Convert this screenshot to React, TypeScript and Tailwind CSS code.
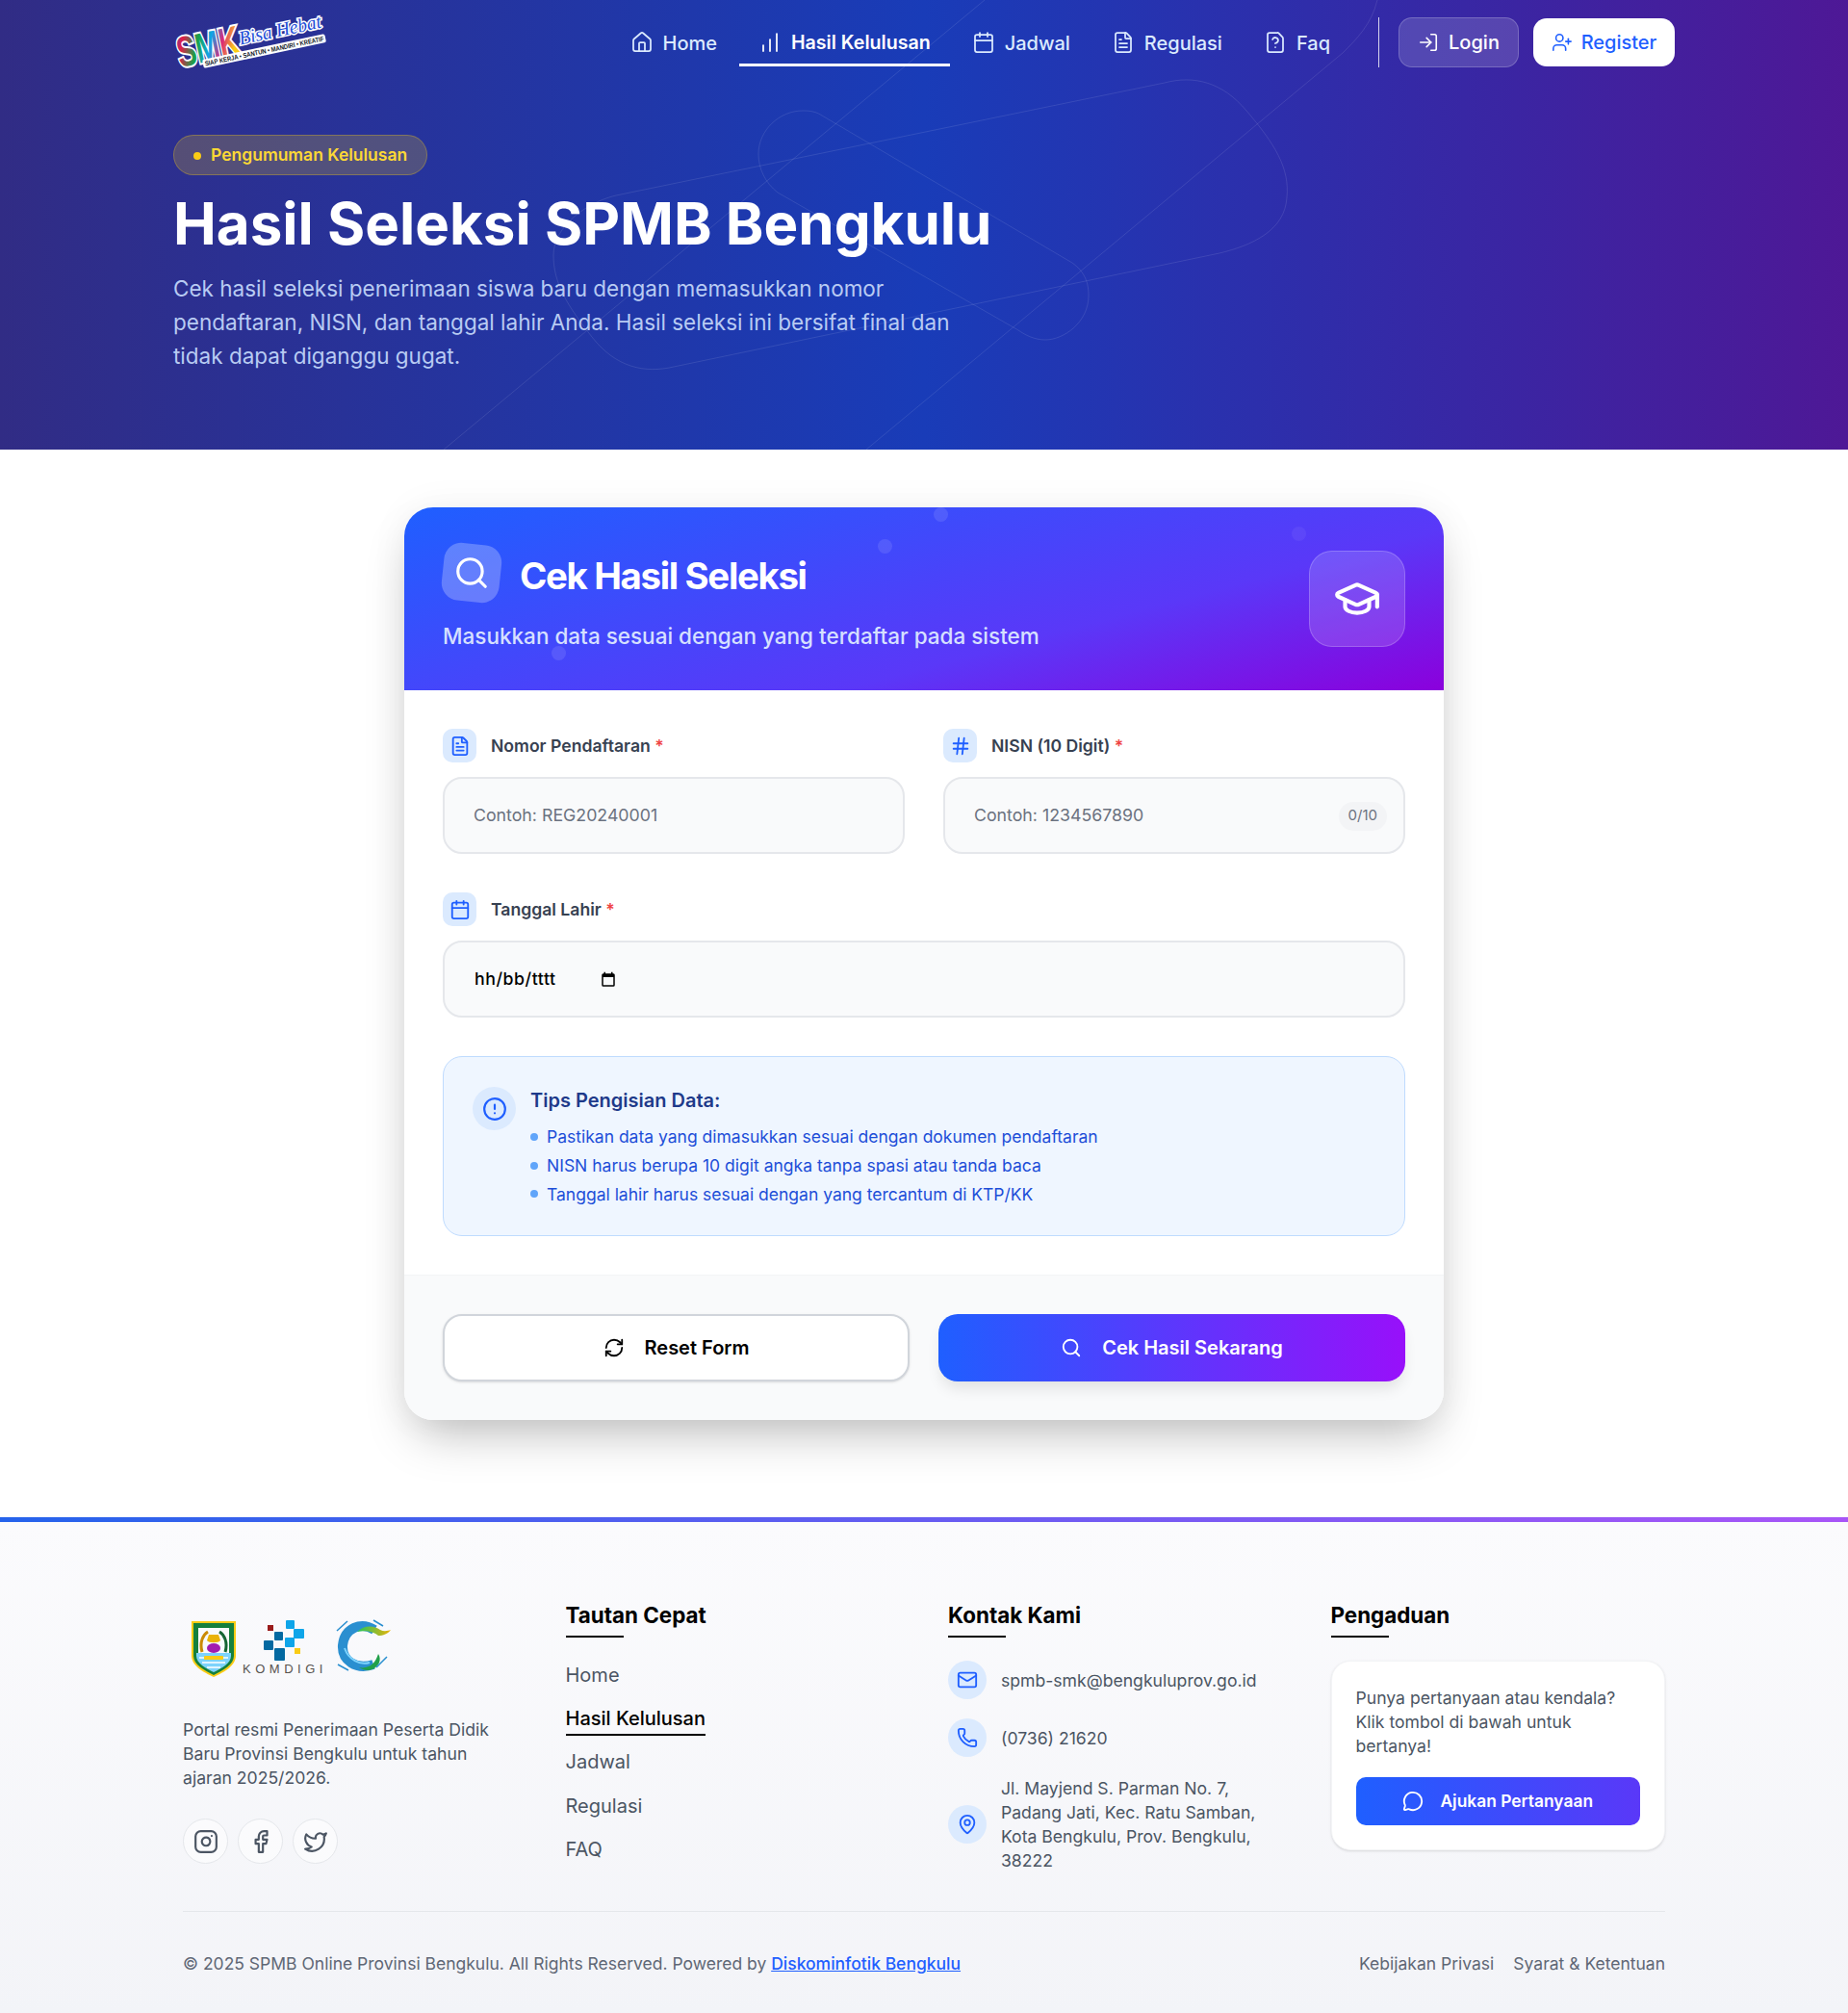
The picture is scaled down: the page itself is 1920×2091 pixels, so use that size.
import {
  Calendar,
  ChartNoAxesColumnIncreasing,
  CircleAlert,
  Facebook,
  FileQuestion,
  FileText,
  GraduationCap,
  Hash,
  House,
  Instagram,
  LogIn,
  Mail,
  MapPin,
  MessageCircle,
  Phone,
  RefreshCw,
  Search,
  Twitter,
  UserPlus,
} from "lucide-react";

const navItems = [
  { label: "Home", icon: House },
  { label: "Hasil Kelulusan", icon: ChartNoAxesColumnIncreasing, active: true },
  { label: "Jadwal", icon: Calendar },
  { label: "Regulasi", icon: FileText },
  { label: "Faq", icon: FileQuestion },
];

const tips = [
  "Pastikan data yang dimasukkan sesuai dengan dokumen pendaftaran",
  "NISN harus berupa 10 digit angka tanpa spasi atau tanda baca",
  "Tanggal lahir harus sesuai dengan yang tercantum di KTP/KK",
];

const quickLinks = ["Home", "Hasil Kelulusan", "Jadwal", "Regulasi", "FAQ"];

const SmkLogo = () => (
  <svg width="170" height="60" viewBox="0 0 170 60" className="ml-[2px] shrink-0 overflow-visible">
    <defs>
      <linearGradient id="smk" x1="0" y1="0" x2="1" y2="0.3">
        <stop offset="0" stopColor="#1d4ed8" />
        <stop offset="0.18" stopColor="#e11d48" />
        <stop offset="0.42" stopColor="#16a34a" />
        <stop offset="0.62" stopColor="#0ea5e9" />
        <stop offset="0.8" stopColor="#db2777" />
        <stop offset="1" stopColor="#facc15" />
      </linearGradient>
    </defs>
    <g transform="rotate(-12 80 30)" fontFamily="'Liberation Sans', sans-serif">
      <text x="2" y="37" fontSize="44" fontWeight="700" fill="url(#smk)" stroke="#fff" strokeWidth="4" paintOrder="stroke" textLength="66" lengthAdjust="spacingAndGlyphs">SMK</text>
      <text x="68" y="27" fontSize="20" fontStyle="italic" fill="#1d4ed8" stroke="#fff" strokeWidth="3" paintOrder="stroke" fontFamily="'Liberation Serif', serif" textLength="87" lengthAdjust="spacingAndGlyphs">Bisa Hebat</text>
      <rect x="26" y="34" width="130" height="9" rx="2" fill="#fff" />
      <text x="28" y="41" fontSize="7" fontWeight="700" fill="#111827" textLength="126" lengthAdjust="spacingAndGlyphs">SIAP KERJA • SANTUN • MANDIRI • KREATIF</text>
    </g>
  </svg>
);

const HeroLines = () => (
  <svg className="absolute inset-0 h-full w-full" viewBox="0 0 1920 467" fill="none" stroke="#ffffff" strokeOpacity="0.1" strokeWidth="1">
    <path d="M1023 0 L461 467" />
    <path d="M1431 0 C1425 25 1410 40 1395 55 L900 467" />
    <path d="M640 203 L1210 86 C1240 78 1270 85 1295 115 C1325 150 1340 175 1337 205 C1335 240 1300 255 1267 263 L700 381 C670 388 640 382 615 350 C590 318 575 295 575 265 C575 235 610 210 640 203Z" />
    <path d="M854 120 L1114 273 C1128 283 1131 295 1131 307 C1131 335 1105 353 1086 353 C1075 353 1065 348 1058 343 L808 200 C795 190 788 175 788 160 C788 135 810 115 834 115 C842 115 848 116 854 120Z" />
  </svg>
);

const FieldLabel = ({ icon: Icon, text }: { icon: any; text: string }) => (
  <div className="flex h-[35px] items-center gap-[15px]">
    <span className="flex h-[35px] w-[35px] items-center justify-center rounded-[10px] bg-[#dbeafe] text-[#1f5fff]">
      <Icon size={22} strokeWidth={2} />
    </span>
    <span className="pt-[1px] text-[17.6px] font-semibold text-[#374151]">
      {text} <span className="text-[#ef4444]">*</span>
    </span>
  </div>
);

const inputBox =
  "mt-[15px] flex h-[80px] items-center rounded-[20px] border-2 border-[#e5e7eb] bg-[#f9fafb] px-[30px] pt-[1px] text-[17.76px]";

const footerHeading = "text-[22.4px] font-bold leading-[36px] text-black";

const App = () => {
  return (
    <div className="w-full bg-white font-['Inter',sans-serif]">
      <header className="relative h-[467px] overflow-hidden bg-[linear-gradient(to_right,#312c85_0%,#193cb8_50%,#4e1896_100%)]">
        <HeroLines />
        <div className="relative mx-auto w-[1560px]">
          <nav className="flex h-[88px] items-start justify-between pt-[17px]">
            <SmkLogo />
            <div className="flex items-start">
              <ul className="mt-[10px] flex items-center gap-[3px] text-[20px] font-medium text-[#dbeafe]">
                {navItems.map((item) => (
                  <li
                    key={item.label}
                    className={
                      item.active
                        ? "flex h-[42px] items-start gap-[10px] border-b-[3px] border-white px-[20px] pt-[3px] text-[19.6px] font-semibold text-white"
                        : "flex h-[42px] items-start gap-[10px] border-b-[3px] border-transparent px-[20px] pt-[3px]"
                    }
                  >
                    <item.icon size={24} strokeWidth={1.75} className="mt-[2px]" />
                    {item.label}
                  </li>
                ))}
              </ul>
              <div className="ml-[30px] mr-[20px] mt-[1px] h-[52px] w-px bg-white/80" />
              <button className="mt-[1px] flex h-[52px] w-[125px] items-center justify-center gap-[10px] rounded-[14px] border border-white/20 bg-white/15 text-[20px] font-medium text-white">
                <LogIn size={22} strokeWidth={1.75} />
                Login
              </button>
              <button className="ml-[15px] mt-[2px] flex h-[50px] w-[147px] items-center justify-center gap-[9px] rounded-[14px] bg-white text-[20px] font-medium text-[#1f5fff]">
                <UserPlus size={22} strokeWidth={1.75} />
                Register
              </button>
            </div>
          </nav>
          <div className="mt-[52px] inline-flex h-[42px] items-center gap-[10px] rounded-full border border-[#facc15]/30 bg-[#facc15]/20 px-[20px] pt-[1px] text-[17.5px] font-semibold text-[#fdd835]">
            <span className="h-[8px] w-[8px] rounded-full bg-[#facc15]" />
            Pengumuman Kelulusan
          </div>
          <h1 className="mt-[13px] text-[60px] font-bold leading-[75px] text-white">
            Hasil Seleksi SPMB Bengkulu
          </h1>
          <p className="mt-[12px] w-[830px] text-[22.5px] leading-[35px] text-[#b8cbf3]">
            Cek hasil seleksi penerimaan siswa baru dengan memasukkan nomor pendaftaran, NISN, dan tanggal lahir Anda. Hasil seleksi ini bersifat final dan tidak dapat diganggu gugat.
          </p>
        </div>
      </header>

      <main className="bg-white pb-[101px] pt-[60px]">
        <div className="mx-auto w-[1080px] overflow-hidden rounded-[30px] bg-white shadow-[0_25px_50px_-12px_rgba(0,0,0,0.25),0_0_40px_rgba(0,0,0,0.05)]">
          <div className="relative h-[190px] overflow-hidden bg-[linear-gradient(165deg,#1f5fff_0%,#5a38f8_65%,#8b00dc_100%)] px-[40px] pt-[38px]">
            <span className="absolute left-[492px] top-[33px] h-[15px] w-[15px] rounded-full bg-white/10" />
            <span className="absolute left-[550px] top-0 h-[15px] w-[15px] rounded-full bg-white/10" />
            <span className="absolute left-[153px] top-[144px] h-[15px] w-[15px] rounded-full bg-white/10" />
            <span className="absolute left-[922px] top-[20px] h-[15px] w-[15px] rounded-full bg-white/5" />
            <div className="flex items-start gap-[20px]">
              <span className="flex h-[60px] w-[60px] rotate-[6deg] items-center justify-center rounded-[18px] bg-white/25">
                <Search size={38} strokeWidth={2} className="-rotate-[6deg] text-white" />
              </span>
              <h2 className="mt-[3px] text-[38.4px] font-bold leading-[60px] tracking-[-0.035em] text-white">Cek Hasil Seleksi</h2>
            </div>
            <p className="mt-[16px] text-[22.5px] font-medium text-[#d6e0ff]">
              Masukkan data sesuai dengan yang terdaftar pada sistem
            </p>
            <span className="absolute right-[40px] top-[45px] flex h-[100px] w-[100px] items-center justify-center rounded-[24px] border border-white/20 bg-white/15 text-white">
              <GraduationCap size={50} strokeWidth={2} />
            </span>
          </div>

          <div className="p-[40px]">
            <div className="grid grid-cols-2 gap-[40px]">
              <div>
                <FieldLabel icon={FileText} text="Nomor Pendaftaran" />
                <div className={inputBox + " text-[#6b7280]"}>Contoh: REG20240001</div>
              </div>
              <div>
                <FieldLabel icon={Hash} text="NISN (10 Digit)" />
                <div className={inputBox + " justify-between text-[#6b7280]"}>
                  Contoh: 1234567890
                  <span className="-mr-[13px] flex h-[30px] items-center rounded-full bg-[#f3f4f6] px-[10px] text-[15px] text-[#6b7280]">0/10</span>
                </div>
              </div>
            </div>
            <div className="mt-[40px]">
              <FieldLabel icon={Calendar} text="Tanggal Lahir" />
              <div className={inputBox + " gap-[45px] text-black"}>
                <span className="ml-[1px] font-medium tracking-[0.55px]">hh/bb/tttt</span>
                <svg width="18" height="18" viewBox="0 0 24 24" fill="#000">
                  <path d="M19 3h-1V1h-2v2H8V1H6v2H5a2 2 0 0 0-2 2v14a2 2 0 0 0 2 2h14a2 2 0 0 0 2-2V5a2 2 0 0 0-2-2zm0 16H5V8h14z" />
                </svg>
              </div>
            </div>
            <div className="mt-[40px] flex h-[187px] gap-[15px] rounded-[20px] border border-[#bfdbfe] bg-[#eff6ff] px-[30px] pt-[31px]">
              <span className="flex h-[45px] w-[45px] items-center justify-center rounded-full bg-[#dbeafe] text-[#1f5fff]">
                <CircleAlert size={26} strokeWidth={2} />
              </span>
              <div>
                <h3 className="text-[20px] font-semibold leading-[28px] text-[#1e3a8a]">Tips Pengisian Data:</h3>
                <ul className="mt-[9px] text-[17.5px] leading-[29.8px] text-[#1d4ed8]">
                  {tips.map((tip) => (
                    <li key={tip} className="flex items-center gap-[9px]">
                      <span className="h-[8px] w-[8px] rounded-full bg-[#60a5fa]" />
                      {tip}
                    </li>
                  ))}
                </ul>
              </div>
            </div>
          </div>

          <div className="grid grid-cols-2 gap-[30px] border-t border-[#f3f4f6] bg-[#f9fafb] p-[40px]">
            <button className="flex h-[70px] items-center justify-center gap-[21px] rounded-[20px] border-2 border-[#d1d5db] bg-white text-[20px] font-semibold text-black shadow-sm">
              <RefreshCw size={22} strokeWidth={2} />
              Reset Form
            </button>
            <button className="flex h-[70px] items-center justify-center gap-[21px] rounded-[20px] bg-[linear-gradient(90deg,#1f5fff,#9810fa)] text-[20px] font-semibold text-white shadow-[0_10px_15px_-3px_rgba(0,0,0,0.1)]">
              <Search size={22} strokeWidth={2} />
              Cek Hasil Sekarang
            </button>
          </div>
        </div>
      </main>

      <div className="h-[5px] bg-[linear-gradient(90deg,#2563eb,#a855f7)]" />
      <footer className="h-[511px] bg-[linear-gradient(180deg,#fbfbfd,#f3f4f8)]">
        <div className="mx-auto w-[1540px] pt-[79px]">
          <div className="grid h-[321px] grid-cols-4 gap-[50px]">
            <div>
              <div className="flex items-start pl-[9px]">
                <svg width="46" height="58" viewBox="0 0 46 58" className="mt-[24px]">
                  <path d="M0 0h46v36c0 10-12 17-23 22C12 53 0 46 0 36z" fill="#facc15" />
                  <path d="M2 2h42v34c0 9-11 15-21 20C13 51 2 45 2 36z" fill="#15803d" />
                  <path d="M7 7h32v29c0 6-9 11-16 14C16 47 7 42 7 36z" fill="#f8fafc" />
                  <path d="M5 33h36v3c0 8-10 13-18 17C15 49 5 44 5 36z" fill="#7dd3fc" />
                  <path d="M8 38h30M11 43h24M16 48h14" stroke="#fff" strokeWidth="1.5" />
                  <ellipse cx="23" cy="28" rx="7" ry="5" fill="#a21caf" />
                  <path d="M18 14h10l2 6c-2 3-12 3-14 0z" fill="#eab308" />
                  <path d="M11 32C8 22 12 14 17 11" stroke="#ca8a04" strokeWidth="3" fill="none" />
                  <path d="M35 32c3-10-1-18-6-21" stroke="#166534" strokeWidth="3" fill="none" />
                  <rect x="13" y="36" width="20" height="4" rx="1" fill="#facc15" />
                </svg>
                <div className="ml-[9px] mt-[23px] flex w-[84px] flex-col items-center">
                  <svg width="44" height="42" viewBox="0 0 44 42">
                    <rect x="4" y="5" width="6" height="6" fill="#991b1b" />
                    <rect x="23" y="0" width="9" height="9" rx="1" fill="#0ea5e9" />
                    <rect x="31" y="9" width="11" height="10" rx="1" fill="#0ea5e9" />
                    <rect x="22" y="18" width="10" height="10" rx="1" fill="#0ea5e9" />
                    <rect x="11" y="12" width="9" height="9" rx="1" fill="#0369a1" />
                    <rect x="0" y="21" width="10" height="10" rx="1" fill="#0369a1" />
                    <rect x="11" y="29" width="11" height="13" rx="1" fill="#0369a1" />
                    <rect x="32" y="29" width="6" height="6" fill="#facc15" />
                  </svg>
                  <span className="mt-[2px] whitespace-nowrap font-['Liberation_Sans',sans-serif] text-[13px] leading-[14px] tracking-[4.5px] text-[#57534e]">KOMDIGI</span>
                </div>
                <svg width="58" height="58" viewBox="0 0 58 58" className="ml-[11px] mt-[22px]" fill="none">
                  <defs>
                    <linearGradient id="swoosh" x1="0" y1="0" x2="1" y2="0">
                      <stop offset="0" stopColor="#22c55e" />
                      <stop offset="1" stopColor="#eab308" />
                    </linearGradient>
                  </defs>
                  <path d="M40 11C26 2 9 9 7 27c-1 16 14 26 32 20" stroke="#2a8fd0" strokeWidth="10" />
                  <path d="M9 30c4 12 16 18 26 15" stroke="#7dd3fc" strokeWidth="2" />
                  <path d="M22 13c8-8 18-6 24-2 4 2 8 1 11 0-3 4-8 6-13 6-4-4-14-6-22-4z" fill="url(#swoosh)" />
                  <path d="M24 50c10 2 17-4 20-14 2 3 2 6 1 9-3 7-12 11-21 5z" fill="#22a04a" />
                  <path d="M1 12 12 2M39 1l10 6M42 50l11-11M2 47l11 6" stroke="#2a8fd0" strokeWidth="1.5" />
                </svg>
              </div>
              <p className="mt-[42px] text-[17.6px] leading-[25px] text-[#4b5563]">
                Portal resmi Penerimaan Peserta Didik Baru Provinsi Bengkulu untuk tahun ajaran 2025/2026.
              </p>
              <div className="mt-[30px] flex gap-[10px] text-[#4b5563]">
                <span className="flex h-[47px] w-[47px] items-center justify-center rounded-full border border-[#e5e7eb] bg-white/50"><Instagram size={26} /></span>
                <span className="flex h-[47px] w-[47px] items-center justify-center rounded-full border border-[#e5e7eb] bg-white/50"><Facebook size={26} /></span>
                <span className="flex h-[47px] w-[47px] items-center justify-center rounded-full border border-[#e5e7eb] bg-white/50"><Twitter size={26} /></span>
              </div>
            </div>

            <div>
              <h4 className={footerHeading}>Tautan Cepat</h4>
              <div className="mt-[3px] h-[2px] w-[60px] bg-black" />
              <ul className="mt-[23px] flex flex-col items-start gap-[11.2px] text-[20px] leading-[32px] text-[#4b5563]">
                {quickLinks.map((link) => (
                  <li key={link} className={link === "Hasil Kelulusan" ? "border-b-2 border-black font-medium text-black" : "border-b-2 border-transparent"}>
                    {link}
                  </li>
                ))}
              </ul>
            </div>

            <div>
              <h4 className={footerHeading}>Kontak Kami</h4>
              <div className="mt-[3px] h-[2px] w-[60px] bg-black" />
              <div className="mt-[24px] flex flex-col gap-[20px] text-[17.6px] leading-[25px] text-[#4b5563]">
                <div className="flex items-center gap-[15px]">
                  <span className="flex h-[40px] w-[40px] shrink-0 items-center justify-center rounded-full bg-[#dbeafe] text-[#1f5fff]"><Mail size={22} /></span>
                  spmb-smk@bengkuluprov.go.id
                </div>
                <div className="flex items-center gap-[15px]">
                  <span className="flex h-[40px] w-[40px] shrink-0 items-center justify-center rounded-full bg-[#dbeafe] text-[#1f5fff]"><Phone size={22} /></span>
                  (0736) 21620
                </div>
                <div className="flex items-center gap-[15px]">
                  <span className="flex h-[40px] w-[40px] shrink-0 items-center justify-center rounded-full bg-[#dbeafe] text-[#1f5fff]"><MapPin size={22} /></span>
                  <span>Jl. Mayjend S. Parman No. 7, Padang Jati, Kec. Ratu Samban, Kota Bengkulu, Prov. Bengkulu, 38222</span>
                </div>
              </div>
            </div>

            <div>
              <h4 className={footerHeading}>Pengaduan</h4>
              <div className="mt-[3px] h-[2px] w-[60px] bg-black" />
              <div className="mt-[24px] rounded-[20px] border border-[#f3f4f6] bg-white p-[25px] shadow-sm">
                <p className="text-[17.6px] leading-[25px] text-[#4b5563]">
                  Punya pertanyaan atau kendala? Klik tombol di bawah untuk bertanya!
                </p>
                <button className="mt-[20px] flex h-[50px] w-full items-center justify-center gap-[17px] rounded-[10px] bg-[linear-gradient(90deg,#1f5fff,#5a38f8)] text-[17.4px] font-semibold text-white">
                  <MessageCircle size={22} />
                  Ajukan Pertanyaan
                </button>
              </div>
            </div>
          </div>

          <div className="mt-[4px] flex items-center justify-between border-t border-[#e5e7eb] pt-[41px] text-[17.5px] leading-[25px] text-[#5f6775]">
            <p>
              © 2025 SPMB Online Provinsi Bengkulu. All Rights Reserved. Powered by{" "}
              <span className="font-medium text-[#1f5fff] underline">Diskominfotik Bengkulu</span>
            </p>
            <div className="flex gap-[20px]">
              <span>Kebijakan Privasi</span>
              <span>Syarat &amp; Ketentuan</span>
            </div>
          </div>
        </div>
      </footer>
    </div>
  );
};

export default App;
